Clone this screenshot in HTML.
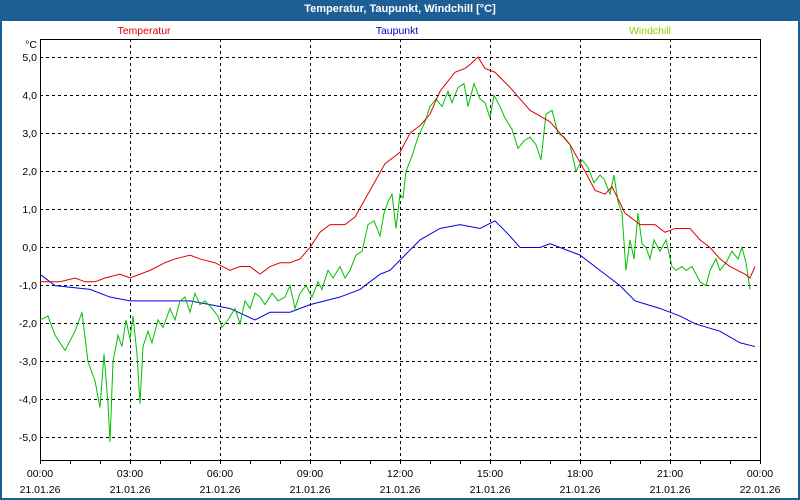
<!DOCTYPE html>
<html><head><meta charset="utf-8"><style>
body{margin:0;width:800px;height:500px;overflow:hidden;background:#fff;font-family:"Liberation Sans",sans-serif}
#w{position:absolute;left:0;top:0;width:796px;height:498px;border:2px solid #1d5f95;border-top:none;}
#t{position:absolute;left:0;top:0;width:800px;height:21px;background:#1d5f95;color:#fff;font-weight:bold;font-size:11px;text-align:center;line-height:19px}
svg{position:absolute;left:0;top:0}
text{font-family:"Liberation Sans",sans-serif;font-size:10.5px}
</style></head><body>
<div id="w"></div>
<div id="t">Temperatur, Taupunkt, Windchill [°C]</div>
<svg width="800" height="500">
<g stroke="#000" stroke-dasharray="3,3" stroke-width="1">
<line x1="40" x2="760" y1="57.5" y2="57.5"/><line x1="40" x2="760" y1="95.5" y2="95.5"/><line x1="40" x2="760" y1="133.5" y2="133.5"/><line x1="40" x2="760" y1="171.5" y2="171.5"/><line x1="40" x2="760" y1="209.5" y2="209.5"/><line x1="40" x2="760" y1="247.5" y2="247.5"/><line x1="40" x2="760" y1="285.5" y2="285.5"/><line x1="40" x2="760" y1="323.5" y2="323.5"/><line x1="40" x2="760" y1="361.5" y2="361.5"/><line x1="40" x2="760" y1="399.5" y2="399.5"/><line x1="40" x2="760" y1="437.5" y2="437.5"/>
<line x1="130.5" x2="130.5" y1="39" y2="460"/><line x1="220.5" x2="220.5" y1="39" y2="460"/><line x1="310.5" x2="310.5" y1="39" y2="460"/><line x1="400.5" x2="400.5" y1="39" y2="460"/><line x1="490.5" x2="490.5" y1="39" y2="460"/><line x1="580.5" x2="580.5" y1="39" y2="460"/><line x1="670.5" x2="670.5" y1="39" y2="460"/>
</g>
<g stroke="#000" stroke-width="1">
<rect x="40.5" y="39.5" width="720" height="421" fill="none"/>
<path d="M40.5 460v4M70.5 460v4M100.5 460v4M130.5 460v4M160.5 460v4M190.5 460v4M220.5 460v4M250.5 460v4M280.5 460v4M310.5 460v4M340.5 460v4M370.5 460v4M400.5 460v4M430.5 460v4M460.5 460v4M490.5 460v4M520.5 460v4M550.5 460v4M580.5 460v4M610.5 460v4M640.5 460v4M670.5 460v4M700.5 460v4M730.5 460v4M760.5 460v4"/>
</g>
<g text-anchor="end" fill="#000">
<text x="37" y="48">°C</text><text x="37" y="61">5,0</text><text x="37" y="99">4,0</text><text x="37" y="137">3,0</text><text x="37" y="175">2,0</text><text x="37" y="213">1,0</text><text x="37" y="251">0,0</text><text x="37" y="289">-1,0</text><text x="37" y="327">-2,0</text><text x="37" y="365">-3,0</text><text x="37" y="403">-4,0</text><text x="37" y="441">-5,0</text>
</g>
<g text-anchor="middle" fill="#000">
<text x="40" y="477">00:00</text><text x="130" y="477">03:00</text><text x="220" y="477">06:00</text><text x="310" y="477">09:00</text><text x="400" y="477">12:00</text><text x="490" y="477">15:00</text><text x="580" y="477">18:00</text><text x="670" y="477">21:00</text><text x="760" y="477">00:00</text>
<text x="40" y="493">21.01.26</text><text x="130" y="493">21.01.26</text><text x="220" y="493">21.01.26</text><text x="310" y="493">21.01.26</text><text x="400" y="493">21.01.26</text><text x="490" y="493">21.01.26</text><text x="580" y="493">21.01.26</text><text x="670" y="493">21.01.26</text><text x="760" y="493">22.01.26</text>
<text x="144" y="34" fill="#e00000">Temperatur</text><text x="397" y="34" fill="#0000c0">Taupunkt</text><text x="650" y="34" fill="#90d000">Windchill</text>
</g>
<g transform="translate(0,247.5) scale(1,-38.1)" fill="none" stroke-width="1">
<polyline vector-effect="non-scaling-stroke" stroke="#0000e0" points="40,-0.7 55,-1 90,-1.1 110,-1.3 130,-1.4 190,-1.4 210,-1.5 230,-1.6 255,-1.9 270,-1.7 290,-1.7 310,-1.5 340,-1.3 360,-1.1 380,-0.7 390,-0.6 405,-0.2 420,0.2 440,0.5 460,0.6 480,0.5 495,0.7 510,0.3 520,0 540,0 550,0.1 580,-0.2 600,-0.6 620,-1 635,-1.4 660,-1.6 680,-1.8 695,-2 720,-2.2 740,-2.5 755,-2.6"/>
<polyline vector-effect="non-scaling-stroke" stroke="#00c000" points="40,-1.9 48,-1.8 55,-2.3 65,-2.7 75,-2.2 82,-1.7 88,-3 95,-3.5 100,-4.2 104,-2.8 108,-4.1 110,-5.1 113,-3 118,-2.3 122,-2.6 126,-1.9 130,-2.4 133,-1.8 137,-2.8 140,-4.1 143,-2.6 148,-2.2 152,-2.5 158,-1.9 163,-2.1 170,-1.6 175,-1.9 180,-1.4 185,-1.3 190,-1.7 195,-1.2 200,-1.5 205,-1.4 212,-1.6 218,-1.8 222,-2.1 228,-1.9 235,-1.6 240,-2 245,-1.4 250,-1.6 255,-1.2 260,-1.3 265,-1.5 272,-1.2 278,-1.4 285,-1.3 290,-1 295,-1.6 300,-1.2 306,-1 312,-1.3 318,-0.9 322,-1.1 328,-0.6 333,-0.8 340,-0.5 345,-0.8 350,-0.6 356,-0.2 362,-0.1 368,0.6 374,0.7 380,0.3 384,0.9 388,1.2 392,1.4 396,0.5 400,1.4 403,1.3 406,2 412,2.4 418,2.9 425,3.3 430,3.7 436,3.9 442,3.7 448,4.1 452,3.8 458,4.2 464,4.3 468,3.7 474,4.3 480,3.9 485,3.8 490,3.4 494,4 500,3.7 505,3.4 512,3.1 518,2.6 524,2.8 530,2.9 536,2.7 541,2.3 546,3.5 552,3.6 558,3 564,2.9 570,2.7 576,2 582,2.3 588,2.1 594,1.7 600,1.9 604,1.8 610,1.4 614,1.9 618,1.2 622,0.9 626,-0.6 630,0.2 634,-0.3 638,0.9 642,0.1 646,0 650,-0.3 654,0.2 660,-0.1 666,0.2 672,-0.5 676,-0.6 682,-0.5 686,-0.6 692,-0.5 700,-0.9 706,-1 710,-0.6 716,-0.3 720,-0.6 726,-0.4 732,-0.1 738,-0.3 742,0 746,-0.4 750,-1.1"/>
<polyline vector-effect="non-scaling-stroke" stroke="#e00000" points="40,-0.9 60,-0.9 75,-0.8 85,-0.9 95,-0.9 105,-0.8 120,-0.7 130,-0.8 140,-0.7 150,-0.6 165,-0.4 175,-0.3 190,-0.2 200,-0.3 215,-0.4 230,-0.6 240,-0.5 250,-0.5 260,-0.7 270,-0.5 280,-0.4 290,-0.4 300,-0.3 310,0 320,0.4 330,0.6 345,0.6 355,0.8 370,1.5 385,2.2 400,2.5 410,3 420,3.2 430,3.5 440,4.1 455,4.6 465,4.7 470,4.8 478,5 485,4.7 495,4.6 510,4.2 530,3.6 550,3.3 570,2.7 585,2 595,1.5 605,1.4 612,1.6 625,0.9 640,0.6 655,0.6 665,0.4 675,0.5 690,0.5 700,0.2 710,0 720,-0.3 730,-0.5 745,-0.7 750,-0.8 755,-0.5"/>
</g>
</svg>
</body></html>
